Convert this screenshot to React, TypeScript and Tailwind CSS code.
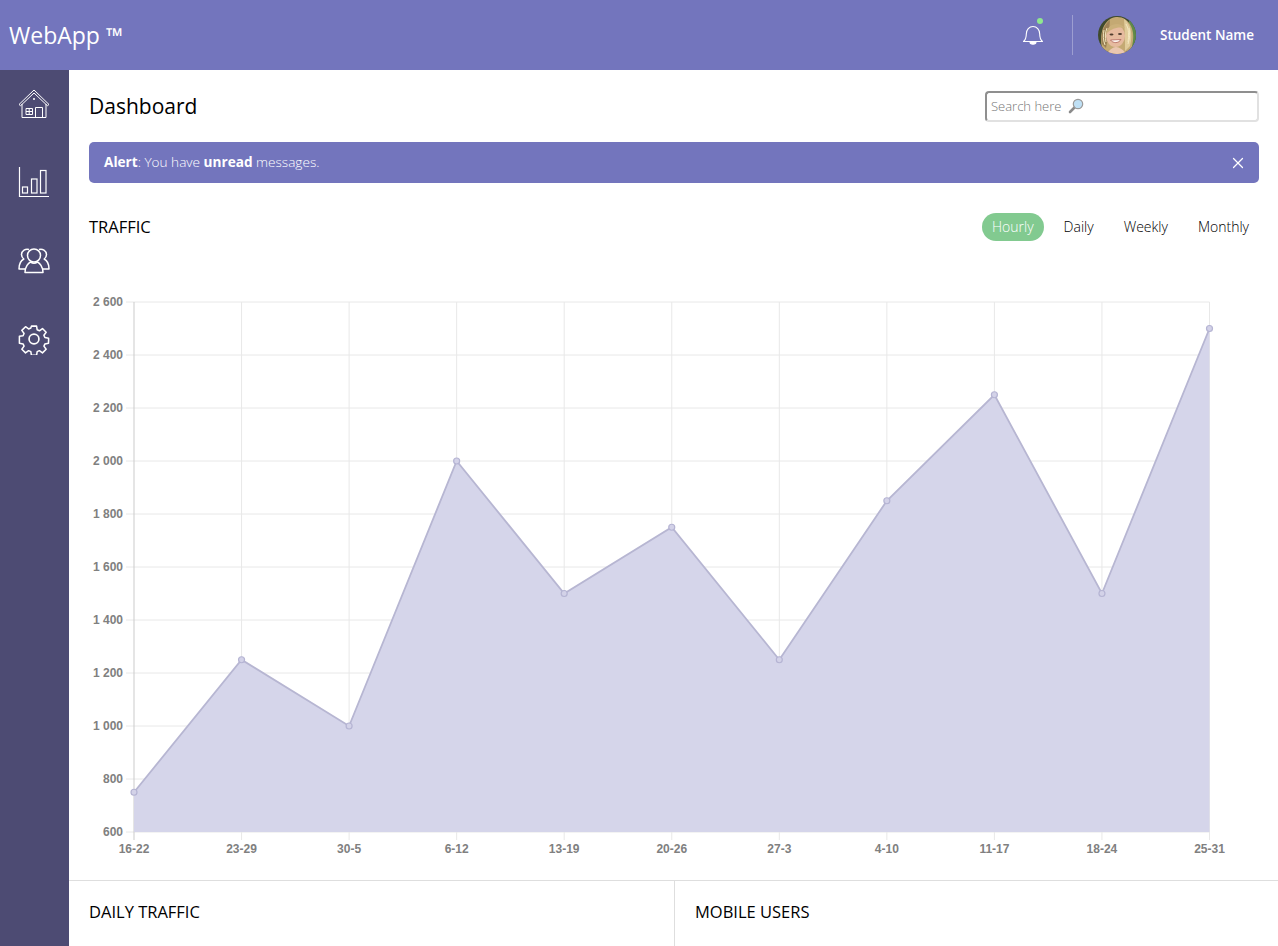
import { X } from 'lucide-react';

const FONT = "font-['Open_Sans',sans-serif]";

const yTicks = [2600, 2400, 2200, 2000, 1800, 1600, 1400, 1200, 1000, 800, 600];
const points = [
  { label: '16-22', value: 750 },
  { label: '23-29', value: 1250 },
  { label: '30-5', value: 1000 },
  { label: '6-12', value: 2000 },
  { label: '13-19', value: 1500 },
  { label: '20-26', value: 1750 },
  { label: '27-3', value: 1250 },
  { label: '4-10', value: 1850 },
  { label: '11-17', value: 2250 },
  { label: '18-24', value: 1500 },
  { label: '25-31', value: 2500 },
];
const ranges = ['Hourly', 'Daily', 'Weekly', 'Monthly'];

const xAt = (i: number) => 134 + i * 107.55;
const yAt = (v: number) => 832 - (v - 600) * 0.265;
const formatTick = (v: number) => String(v).replace(/\B(?=(\d{3})+$)/g, ' ');

function HouseIcon() {
  return (
    <svg width="32" height="30" viewBox="0 0 32 30" fill="none" stroke="white" strokeWidth="1" strokeLinejoin="round">
      <path d="M1 15.5 16 1l15 14.5-1.6 1.2L16 4 2.6 16.7z" />
      <path d="M4 15v13.5h24V15" />
      <rect x="17.5" y="18.5" width="7" height="10" />
      <rect x="8" y="19.5" width="6.5" height="6" />
      <path d="M11.2 19.5v6M8 22.5h6.5" />
      <circle cx="16" cy="10" r="1" fill="white" stroke="none" />
    </svg>
  );
}

function BarsIcon() {
  return (
    <svg width="32" height="32" viewBox="0 0 32 32" fill="none" stroke="white" strokeWidth="1.2">
      <path d="M1.5 1v29.5H31" />
      <rect x="4.5" y="21" width="5" height="6" />
      <rect x="13.5" y="13" width="5.5" height="14" />
      <rect x="22.5" y="4.5" width="5.5" height="22.5" />
    </svg>
  );
}

function UsersIcon() {
  return (
    <svg width="32" height="28" viewBox="0 0 32 28" fill="none" stroke="white" strokeWidth="1.5" strokeLinejoin="round">
      <circle cx="16" cy="9.5" r="6.5" />
      <path d="M7 26.5c0-6 3.5-9.5 5.5-10.5 2 1.300 5 1.300 7 0 2 1 5.500 4.500 5.500 10.500z" />
      <path d="M11 3.500A5.700 5.700 0 0 0 3.500 8.500c0 2 1 3.500 2.300 4.500C3 14.500 1 18 1 23h6" />
      <path d="M21 3.500a5.700 5.700 0 0 1 7.500 5c0 2-1 3.500-2.300 4.500 2.800 1.500 4.800 5 4.800 10h-6" />
    </svg>
  );
}

function GearIcon() {
  return (
    <svg width="32" height="32" viewBox="0 0 24 24" fill="none" stroke="white" strokeWidth="1.25" strokeLinejoin="round">
      <path d="M9.900 1.500h4.200l.5 3 1.800.8 2.500-1.800 3 3-1.800 2.500.8 1.800 3 .5v1.400l-.1 2.800-2.900.5-.8 1.800 1.800 2.500-3 3-2.500-1.800-1.800.8-.5 3H9.900l-.5-3-1.800-.8-2.500 1.800-3-3 1.800-2.500-.8-1.800-3-.5V9.800l3-.5.8-1.800-1.800-2.500 3-3 2.500 1.800 1.800-.8z" transform="translate(12 12) scale(.92) translate(-12 -12)" />
      <circle cx="12" cy="12" r="3.700" />
    </svg>
  );
}

function BellIcon() {
  return (
    <svg width="22" height="24" viewBox="0 0 22 24" fill="none" stroke="white" strokeWidth="1.100" strokeLinejoin="round">
      <path d="M1.500 18.500c1.700-1.500 2.800-3 2.800-7.500 0-4.500 3-7.500 6.700-7.500s6.700 3 6.700 7.500c0 4.500 1.100 6 2.800 7.500z" />
      <path d="M8 19c0 3 6 3 6 0" fill="white" />
    </svg>
  );
}

function Avatar() {
  return (
    <svg width="38" height="38" viewBox="0 0 38 38" className="rounded-full">
      <rect width="38" height="38" fill="#3f4a2c" />
      <rect x="31" width="7" height="38" fill="#5f8a48" />
      <path d="M6 38C0 24 3 3 18 1c13-1 19 13 17 24-1 5-1 9-4 13z" fill="#c4a973" />
      <path d="M4 28C2 19 6 8 12 4l-1 12-3 16z" fill="#9a8055" />
      <path d="M26 3c7 5 9 15 6 27l-5 5V20z" fill="#e0cb9a" />
      <path d="M28 8c3 5 3 12 2 18M31 12c1 5 1 10-1 16M6 14c-1 5-1 10 1 15M9 12c-2 5-2 9-1 14" stroke="#f2e6bf" strokeWidth="1" fill="none" />
      <ellipse cx="17.500" cy="20" rx="9.500" ry="11" fill="#e6bb9f" />
      <path d="M8 18C9 9 20 4 27 12c-5-1-12-1-19 6z" fill="#cbb07a" />
      <ellipse cx="13.500" cy="18.500" rx="2" ry="1" fill="#4f3d2e" />
      <ellipse cx="22" cy="18" rx="2" ry="1" fill="#4f3d2e" />
      <path d="M12.500 24c2.500 3.500 8 3.500 10.500-.5z" fill="#fdf6ef" stroke="#b0635a" strokeWidth=".8" />
      <path d="M9 38c2-4 6-7 9-7s8 3 10 7z" fill="#eac7b0" />
    </svg>
  );
}

function Magnifier() {
  return (
    <svg width="16" height="16" viewBox="0 0 16 16" fill="none">
      <path d="M6.500 9.500 2 14" stroke="#8b8b8b" strokeWidth="2.600" strokeLinecap="round" />
      <circle cx="10" cy="6" r="4.700" fill="#bfe0f5" stroke="#9a9a9a" strokeWidth="1.200" />
    </svg>
  );
}

function TrafficChart() {
  const line = points.map((p, i) => `${xAt(i)},${yAt(p.value)}`).join(' ');
  const area = `134,832 ${line} 1209.5,832`;
  return (
    <svg viewBox="69 241 1209 639" className="block h-[639px] w-full">
      {yTicks.map((t) => (
        <g key={t}>
          <line x1="126" x2="1209.500" y1={yAt(t)} y2={yAt(t)} stroke="#e8e8e8" strokeWidth="1" />
          <text x="123" y={yAt(t) + 4} textAnchor="end" fontFamily="Liberation Sans" fontWeight="700" fontSize="12" fill="#808080">
            {formatTick(t)}
          </text>
        </g>
      ))}
      {points.map((p, i) => (
        <g key={p.label}>
          <line x1={xAt(i)} x2={xAt(i)} y1="302" y2="840" stroke={i === 0 ? '#cbcbcb' : '#e8e8e8'} strokeWidth="1" />
          <text x={xAt(i)} y="853" textAnchor="middle" fontFamily="Liberation Sans" fontWeight="700" fontSize="12" fill="#808080">
            {p.label}
          </text>
        </g>
      ))}
      <polygon points={area} fill="#d5d5ea" />
      <polyline points={line} fill="none" stroke="#b7b6d2" strokeWidth="1.800" />
      {points.map((p, i) => (
        <circle key={p.label} cx={xAt(i)} cy={yAt(p.value)} r="3" fill="#d3d2e8" stroke="#b5b4d3" strokeWidth="1.200" />
      ))}
    </svg>
  );
}

export default function App() {
  return (
    <div className={`flex h-screen w-full flex-col overflow-hidden bg-white text-black ${FONT}`}>
      {/* Header */}
      <header className="flex h-[70px] shrink-0 items-center bg-[#7375bd] pl-[9px] pr-6 text-white">
        <span className="text-[23px] leading-none">WebApp <span className="text-[22px] font-bold">™</span></span>
        <div className="ml-auto relative mr-[28px] flex">
          <BellIcon />
          <span className="absolute right-[1px] top-[-5px] h-[6px] w-[6px] rounded-full bg-[#8fe88f]" />
        </div>
        <div className="h-10 w-px bg-white/30" />
        <div className="ml-[25px]">
          <Avatar />
        </div>
        <span className="ml-6 text-[13.5px] font-semibold">Student Name</span>
      </header>

      <div className="flex min-h-0 flex-1">
        {/* Sidebar */}
        <nav className="flex w-[69px] shrink-0 flex-col items-center bg-[#4d4b73] pr-px pt-[19px]">
          <a className="flex h-[30px] items-center"><HouseIcon /></a>
          <a className="mt-[47px] flex h-[32px] items-center"><BarsIcon /></a>
          <a className="mt-[48px] flex h-[28px] items-center"><UsersIcon /></a>
          <a className="mt-[49px] flex h-[32px] items-center"><GearIcon /></a>
        </nav>

        <main className="flex min-w-0 flex-1 flex-col">
          <div className="pl-5 pr-[19px] pt-[21px]">
            <div className="flex h-[31px] items-center justify-between">
              <h1 className="text-[21px] font-normal">Dashboard</h1>
              <div className="relative">
                <input
                  placeholder="Search here"
                  className="h-[31px] w-[274px] rounded-[4px] border-2 border-b-[#e1e1e1] border-l-[#8f8f8f] border-r-[#e1e1e1] border-t-[#8f8f8f] pb-[2px] pl-[4px] pr-[5px] text-[13px] font-light outline-none placeholder:text-[#757575]"
                />
                <span className="absolute left-[83px] top-[7px]"><Magnifier /></span>
              </div>
            </div>

            <div className="mt-5 flex h-[41px] items-center justify-between rounded-[5px] bg-[#7375bd] pl-[15px] pr-[12px] text-[13.6px] font-light text-white">
              <p><strong className="font-bold">Alert</strong>: You have <strong className="font-bold">unread</strong> messages.</p>
              <X size={18} strokeWidth={1.600} />
            </div>

            <div className="mt-[30px] flex h-7 items-center justify-between">
              <h2 className="text-[16.5px] font-normal">TRAFFIC</h2>
              <div className="flex gap-[10px] text-sm font-light">
                {ranges.map((r) => (
                  <button
                    key={r}
                    className={r === 'Hourly' ? 'h-7 rounded-full bg-[#82ca90] px-[10px] text-white' : 'h-7 rounded-full px-[10px]'}
                  >
                    {r}
                  </button>
                ))}
              </div>
            </div>
          </div>

          <TrafficChart />

          <div className="flex min-h-0 flex-1 border-t border-[#dedede]">
            <section className="w-[606px] border-r border-[#dedede] pl-5 pt-[19px] text-[16.5px]">DAILY TRAFFIC</section>
            <section className="flex-1 pl-5 pt-[19px] text-[16.5px]">MOBILE USERS</section>
          </div>
        </main>
      </div>
    </div>
  );
}
